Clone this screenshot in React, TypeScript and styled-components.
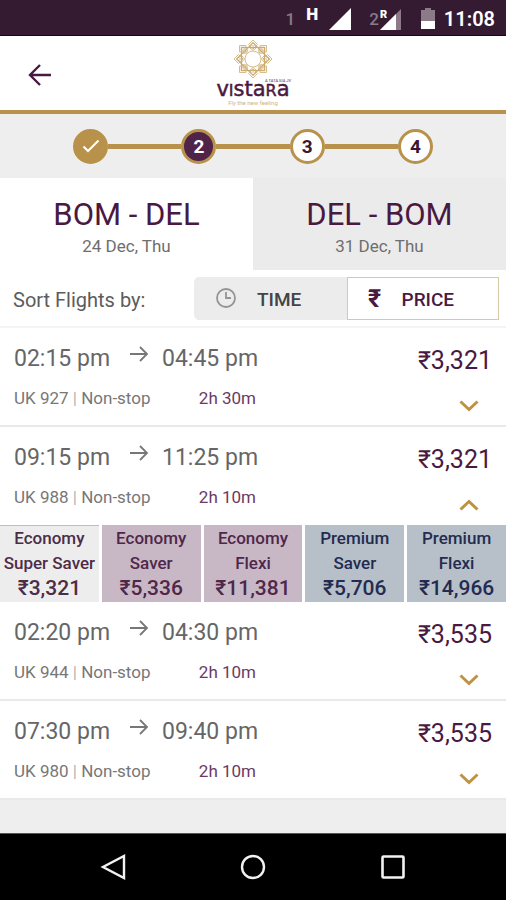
import React, { useState } from "react";
import styled, { createGlobalStyle } from "styled-components";

const plum = "#4a1942";
const gold = "#b8924a";

const GlobalStyle = createGlobalStyle`
  *, *::before, *::after { box-sizing: border-box; }
  body { margin: 0; background: #eeeeee; font-family: Roboto, "Noto Sans", sans-serif; }
  button { font: inherit; color: inherit; border: 0; padding: 0; background: none; cursor: pointer; }
  svg { display: block; flex: none; }
`;

const Screen = styled.div`
  min-height: 100vh;
  display: flex;
  flex-direction: column;
  background: #eeeeee;
`;

const StatusBar = styled.div`
  display: flex;
  align-items: center;
  justify-content: flex-end;
  height: 36px;
  padding: 2px 11px 0 0;
  background: #351b31;
  border-bottom: 1px solid #120810;
  color: #ffffff;
`;

const Sim = styled.span`
  font-size: 17px;
  font-weight: 500;
  color: #8c7a89;
`;

const NetworkType = styled.span`
  margin: 0 11px 10px;
  font-size: 17px;
  line-height: 18px;
  font-weight: 900;
`;

const SignalIcon = styled.svg`
  margin-right: 18px;
`;

const Clock = styled.time`
  margin-left: 9px;
  font-size: 20px;
  font-weight: 600;
`;

const Header = styled.header`
  display: grid;
  grid-template-columns: 80px 1fr 80px;
  align-items: center;
  height: 78px;
  background: #ffffff;
  border-bottom: 4px solid ${gold};
`;

const BackButton = styled.button`
  display: flex;
  padding: 12px 20px 8px;
`;

const Brand = styled.div`
  display: flex;
  flex-direction: column;
  align-items: center;
`;

const BrandNote = styled.span`
  margin-left: 50px;
  font-size: 4px;
  line-height: 4px;
  font-weight: 500;
  color: #76566f;
`;

const BrandName = styled.span`
  font-family: "DejaVu Sans", sans-serif;
  font-size: 21px;
  line-height: 12px;
  color: ${plum};
  -webkit-text-stroke: 0.5px ${plum};
`;

const BrandCap = styled.span`
  font-size: 16px;
`;

const Tagline = styled.span`
  padding-top: 2px;
  font-size: 6px;
  line-height: 8px;
  color: #d0b37c;
`;

const Stepper = styled.ol`
  display: flex;
  align-items: center;
  justify-content: center;
  height: 64px;
  margin: 0;
  padding: 0 73px;
  list-style: none;
`;

const Step = styled.li<{ $state: "done" | "current" | "next" }>`
  display: flex;
  align-items: center;
  justify-content: center;
  flex: none;
  width: 35px;
  height: 35px;
  border: 3px solid ${gold};
  border-radius: 50%;
  font-size: 19px;
  font-weight: 700;
  background: ${(p) => (p.$state === "done" ? gold : p.$state === "current" ? "#4f2448" : "#ffffff")};
  color: ${(p) => (p.$state === "next" ? "#3b1535" : "#ffffff")};
`;

const StepLine = styled.li`
  flex: 1;
  height: 5px;
  background: ${gold};
`;

const Tabs = styled.div`
  display: grid;
  grid-template-columns: 1fr 1fr;
`;

const Tab = styled.button<{ $active: boolean }>`
  height: 92px;
  padding-top: 7px;
  background: ${(p) => (p.$active ? "#ffffff" : "#ebebeb")};
`;

const Route = styled.span`
  display: block;
  font-size: 31px;
  line-height: 36px;
  color: ${plum};
`;

const TravelDate = styled.span`
  display: block;
  font-size: 17px;
  line-height: 26px;
  color: #6e6e6e;
`;

const SortBar = styled.div`
  display: flex;
  align-items: center;
  justify-content: space-between;
  height: 58px;
  padding: 0 7px 0 13px;
  background: #ffffff;
  border-bottom: 2px solid #f4f4f4;
`;

const SortLabel = styled.span`
  padding-top: 3px;
  font-size: 20px;
  color: #5c5c5c;
`;

const SortGroup = styled.div`
  display: grid;
  grid-template-columns: 1fr 1fr;
  width: 305px;
`;

const SortButton = styled.button<{ $active: boolean }>`
  display: grid;
  grid-template-columns: 22px 1fr;
  align-items: center;
  column-gap: ${(p) => (p.$active ? "16px" : "20px")};
  height: 43px;
  padding: 2px 0 0 ${(p) => (p.$active ? "16px" : "20px")};
  border: 1px solid ${(p) => (p.$active ? "#d9c8a4" : "#ececec")};
  border-radius: ${(p) => (p.$active ? "0" : "5px 0 0 5px")};
  background: ${(p) => (p.$active ? "#ffffff" : "#ececec")};
  color: ${(p) => (p.$active ? plum : "#444444")};
  font-size: 19px;
  font-weight: 500;
  text-align: left;
`;

const Rupee = styled.span`
  font-size: 25px;
  line-height: 28px;
  font-weight: 700;
  text-align: center;
`;

const FlightList = styled.main`
  flex: 1;
`;

const Flight = styled.article<{ $open: boolean }>`
  background: #ffffff;
  border-bottom: ${(p) => (p.$open ? "0" : "2px solid #e9e9e9")};
`;

const FlightSummary = styled.div<{ $open: boolean }>`
  display: grid;
  grid-template-columns: 115px 33px 94px 1fr;
  grid-template-rows: 36px 44px;
  align-items: center;
  height: ${(p) => (p.$open ? "98px" : "97px")};
  padding: 12px 14px 0 14px;
`;

const Time = styled.time`
  font-size: 23px;
  color: #666666;
  white-space: nowrap;
`;

const Meta = styled.span`
  grid-column: 1 / 3;
  font-size: 17px;
  color: #777777;
  white-space: nowrap;

  i { font-style: normal; color: #b5b5b5; }
`;

const Duration = styled.span`
  justify-self: end;
  font-size: 17px;
  color: #6b3a63;
`;

const Price = styled.span`
  justify-self: end;
  padding-top: 4px;
  font-size: 25px;
  color: ${plum};
`;

const Toggle = styled.button`
  justify-self: end;
  margin-top: 15px;
  padding: 6px 13px 6px 6px;
`;

const Fares = styled.div`
  display: grid;
  grid-template-columns: repeat(5, 1fr);
  column-gap: 3px;
`;

const tones = {
  plain: { bg: "#ededee", fg: "#4c2d48" },
  plum: { bg: "#c8b8c6", fg: "#4f2749" },
  blue: { bg: "#b7bfc8", fg: "#232c50" },
};

const Fare = styled.button<{ $tone: keyof typeof tones }>`
  display: flex;
  flex-direction: column;
  align-items: center;
  height: 77px;
  border-top: 1px solid #bdbdc4;
  background: ${(p) => tones[p.$tone].bg};
  color: ${(p) => tones[p.$tone].fg};
  font-size: 17px;
  line-height: 25px;
  font-weight: 500;
  white-space: nowrap;
`;

const FarePrice = styled.span`
  font-size: 21px;
  line-height: 24px;
  font-weight: 500;
`;

const NavBar = styled.nav`
  display: flex;
  align-items: center;
  justify-content: center;
  gap: 90px;
  height: 67px;
  border-top: 1px solid #555555;
  background: #000000;
`;

const NavButton = styled.button`
  padding: 12px;
`;

const Emblem = () => {
  const turns = [0, 45, 90, 135, 180, 225, 270, 315];
  return (
    <svg width="40" height="40" viewBox="-20 -20 40 40" fill="none" stroke="#ccab70" strokeWidth="1.2">
      <rect x="-11.5" y="-11.5" width="23" height="23" />
      <rect x="-11.5" y="-11.5" width="23" height="23" transform="rotate(45)" />
      <circle r="8" strokeWidth="0.8" />
      {turns.map((a) => (
        <g key={a} transform={`rotate(${a})`} strokeWidth="0.8">
          <path d="M0-19 4.5-14.5 0-10-4.5-14.5Z" />
          <path d="M0-16.5 2-14.5 0-12.5-2-14.5Z" />
          <path d="M-3-11 0-8.5 3-11" />
        </g>
      ))}
    </svg>
  );
};

const Chevron = ({ up }: { up: boolean }) => (
  <svg width="20" height="12" viewBox="0 0 20 12" fill="none" stroke="#bd9242" strokeWidth="3">
    <path d={up ? "M1.5 10.5 10 2.5 18.5 10.5" : "M1.5 1.5 10 9.5 18.5 1.5"} />
  </svg>
);

const Arrow = () => (
  <svg width="20" height="26" viewBox="0 0 20 26" fill="none" stroke="#777777" strokeWidth="1.8">
    <path d="M1 9H18M11 2 18 9 11 16" />
  </svg>
);

type FareInfo = { cabin: string; kind: string; price: string; tone: keyof typeof tones };

const fares: FareInfo[] = [
  { cabin: "Economy", kind: "Super Saver", price: "₹3,321", tone: "plain" },
  { cabin: "Economy", kind: "Saver", price: "₹5,336", tone: "plum" },
  { cabin: "Economy", kind: "Flexi", price: "₹11,381", tone: "plum" },
  { cabin: "Premium", kind: "Saver", price: "₹5,706", tone: "blue" },
  { cabin: "Premium", kind: "Flexi", price: "₹14,966", tone: "blue" },
];

const flights = [
  { no: "UK 927", from: "02:15 pm", to: "04:45 pm", length: "2h 30m", price: "₹3,321" },
  { no: "UK 988", from: "09:15 pm", to: "11:25 pm", length: "2h 10m", price: "₹3,321" },
  { no: "UK 944", from: "02:20 pm", to: "04:30 pm", length: "2h 10m", price: "₹3,535" },
  { no: "UK 980", from: "07:30 pm", to: "09:40 pm", length: "2h 10m", price: "₹3,535" },
];

const tabs = [
  { route: "BOM - DEL", date: "24 Dec, Thu" },
  { route: "DEL - BOM", date: "31 Dec, Thu" },
];

export default function App() {
  const [tab, setTab] = useState(0);
  const [sort, setSort] = useState("price");
  const [open, setOpen] = useState("UK 988");

  return (
    <Screen>
      <GlobalStyle />
      <StatusBar>
        <Sim>1</Sim>
        <NetworkType>H</NetworkType>
        <SignalIcon width="22" height="22" viewBox="0 0 22 22">
          <path d="M22 0V22H0Z" fill="#ffffff" />
        </SignalIcon>
        <Sim>2</Sim>
        <SignalIcon width="24" height="22" viewBox="0 0 24 22">
          <path d="M22 1V22H1Z" fill="#8c7a89" />
          <path d="M17 6V22H1Z" fill="#ffffff" />
          <path d="M0 0H9V10H0Z" fill="#351b31" />
          <text x="1" y="10" fontSize="11" fontWeight="900" fill="#ffffff">R</text>
        </SignalIcon>
        <svg width="14" height="21" viewBox="0 0 14 21">
          <path d="M4 0H10V2H14V13H0V2H4Z" fill="#8c7a89" />
          <path d="M0 13H14V21H0Z" fill="#ffffff" />
        </svg>
        <Clock>11:08</Clock>
      </StatusBar>

      <Header>
        <BackButton aria-label="Back">
          <svg width="40" height="24" viewBox="0 0 40 24" fill="none" stroke={plum} strokeWidth="2.4">
            <path d="M31 12H10M20 2 10 12 20 22" />
          </svg>
        </BackButton>
        <Brand>
          <Emblem />
          <BrandNote>A TATA SIA JV</BrandNote>
          <BrandName>
            v<BrandCap>I</BrandCap>sta<BrandCap>R</BrandCap>a
          </BrandName>
          <Tagline>Fly the new feeling</Tagline>
        </Brand>
      </Header>

      <Stepper>
        <Step $state="done" aria-label="Step 1, done">
          <svg width="18" height="14" viewBox="0 0 18 14" fill="none" stroke="#ffffff" strokeWidth="2">
            <path d="M1.5 7.5 6 12 16.5 1.5" />
          </svg>
        </Step>
        <StepLine aria-hidden />
        <Step $state="current">2</Step>
        <StepLine aria-hidden />
        <Step $state="next">3</Step>
        <StepLine aria-hidden />
        <Step $state="next">4</Step>
      </Stepper>

      <Tabs role="tablist">
        {tabs.map((t, i) => (
          <Tab key={t.route} role="tab" aria-selected={tab === i} $active={tab === i} onClick={() => setTab(i)}>
            <Route>{t.route}</Route>
            <TravelDate>{t.date}</TravelDate>
          </Tab>
        ))}
      </Tabs>

      <SortBar>
        <SortLabel id="sort-label">Sort Flights by:</SortLabel>
        <SortGroup role="group" aria-labelledby="sort-label">
          <SortButton $active={sort === "time"} aria-pressed={sort === "time"} onClick={() => setSort("time")}>
            <svg width="22" height="22" viewBox="0 0 22 22" fill="none" stroke="#949494" strokeWidth="1.8">
              <circle cx="11" cy="10" r="9" />
              <path d="M11 4V10H16" />
            </svg>
            TIME
          </SortButton>
          <SortButton $active={sort === "price"} aria-pressed={sort === "price"} onClick={() => setSort("price")}>
            <Rupee>₹</Rupee>
            PRICE
          </SortButton>
        </SortGroup>
      </SortBar>

      <FlightList>
        {flights.map((f) => {
          const isOpen = open === f.no;
          return (
            <Flight key={f.no} $open={isOpen}>
              <FlightSummary $open={isOpen}>
                <Time>{f.from}</Time>
                <Arrow />
                <Time>{f.to}</Time>
                <Price>{f.price}</Price>
                <Meta>{f.no} <i>|</i> Non-stop</Meta>
                <Duration>{f.length}</Duration>
                <Toggle aria-label={`Fares for ${f.no}`} aria-expanded={isOpen} onClick={() => setOpen(isOpen ? "" : f.no)}>
                  <Chevron up={isOpen} />
                </Toggle>
              </FlightSummary>
              {isOpen && (
                <Fares>
                  {fares.map((fare) => (
                    <Fare key={fare.cabin + fare.kind} $tone={fare.tone}>
                      <span>{fare.cabin}</span>
                      <span>{fare.kind}</span>
                      <FarePrice>{fare.price}</FarePrice>
                    </Fare>
                  ))}
                </Fares>
              )}
            </Flight>
          );
        })}
      </FlightList>

      <NavBar>
        <NavButton aria-label="Back">
          <svg width="26" height="28" viewBox="0 0 26 28" fill="none" stroke="#f2f2f2" strokeWidth="2.4">
            <path d="M24 3V25L3 14Z" />
          </svg>
        </NavButton>
        <NavButton aria-label="Home">
          <svg width="26" height="26" viewBox="0 0 26 26" fill="none" stroke="#f2f2f2" strokeWidth="2.4">
            <circle cx="13" cy="13" r="11" />
          </svg>
        </NavButton>
        <NavButton aria-label="Recent apps">
          <svg width="26" height="26" viewBox="0 0 26 26" fill="none" stroke="#f2f2f2" strokeWidth="2.6">
            <rect x="2.5" y="2.5" width="21" height="21" rx="1" />
          </svg>
        </NavButton>
      </NavBar>
    </Screen>
  );
}
